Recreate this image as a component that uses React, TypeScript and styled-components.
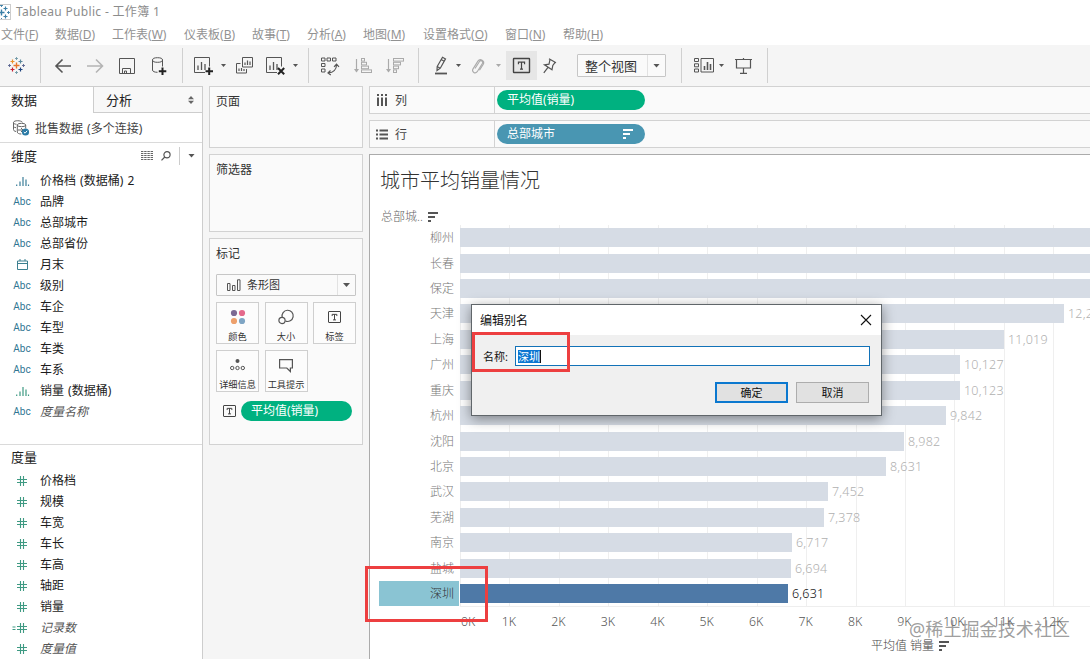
import React from "react";
import styled, { createGlobalStyle } from "styled-components";

const Global = createGlobalStyle`
  * { box-sizing: border-box; }
  html, body { margin: 0; padding: 0; overflow: hidden; }
  body {
    font-family: "Noto Sans", "Noto Sans CJK SC", sans-serif;
    font-size: 12px;
    color: #222;
    background: #f5f5f5;
  }
  svg { display: block; flex: none; overflow: visible; }
`;

const Page = styled.div`
  position: relative;
  width: 1090px;
  height: 659px;
  overflow: hidden;
  display: flex;
  flex-direction: column;
  background: #f5f5f5;
`;

const TitleBar = styled.header`
  height: 24px;
  background: #fff;
  display: flex;
  align-items: center;
  gap: 5px;
  font-size: 12px;
  letter-spacing: 0.32px;
  line-height: 24px;
  color: #8c8c8c;
`;

const AppIcon = styled.span`
  width: 11px;
  height: 16px;
  border: 1px solid #ccc;
  border-left: 0;
  overflow: hidden;
  display: flex;
  align-items: center;
  justify-content: flex-end;
`;

const MenuBar = styled.nav`
  height: 21px;
  background: #fff;
  padding-left: 1px;
  display: grid;
  grid-template-columns: 54px 57px 72px 68px 55px 56px 60px 82px 58px 60px;
  line-height: 21px;
  color: #929292;
  white-space: nowrap;
`;

const Toolbar = styled.div`
  height: 41px;
  display: flex;
  align-items: center;
  background: #f5f5f5;
`;

const Tool = styled.span<{ $before: number; $w: number; $active?: boolean }>`
  flex: none;
  margin-left: ${(p) => p.$before}px;
  width: ${(p) => p.$w}px;
  height: ${(p) => (p.$active ? 29 : 20)}px;
  display: flex;
  align-items: center;
  justify-content: center;
  background: ${(p) => (p.$active ? "#e6e6e6" : "transparent")};
`;

const Separator = styled.span<{ $before: number }>`
  flex: none;
  margin-left: ${(p) => p.$before}px;
  width: 1px;
  height: 35px;
  background: #d0d0d0;
`;

const Caret = styled.span<{ $before?: number; $size?: number; $color?: string }>`
  flex: none;
  margin-left: ${(p) => p.$before ?? 0}px;
  width: ${(p) => p.$size ?? 5}px;
  height: ${(p) => (p.$size ?? 5) / 2 + 0.5}px;
  background: ${(p) => p.$color ?? "#555"};
  clip-path: polygon(0 0, 100% 0, 50% 100%);
`;

const Combo = styled.div<{ $w: number; $h: number; $before?: number }>`
  flex: none;
  margin-left: ${(p) => p.$before ?? 0}px;
  width: ${(p) => p.$w}px;
  height: ${(p) => p.$h}px;
  border: 1px solid #c6c6c6;
  border-radius: 1px;
  background: #fafafa;
  display: flex;
`;

const ComboValue = styled.span<{ $pad: number; $size: number }>`
  flex: 1;
  display: flex;
  align-items: center;
  gap: 6px;
  padding-left: ${(p) => p.$pad}px;
  font-size: ${(p) => p.$size}px;
  line-height: 18px;
  color: #333;
  white-space: nowrap;
`;

const ComboArrow = styled.span`
  width: 18px;
  border-left: 1px solid #e2e2e2;
  display: flex;
  align-items: center;
  justify-content: center;
`;

const Workspace = styled.main`
  flex: 1;
  min-height: 0;
  display: flex;
`;

const DataPane = styled.aside`
  width: 203px;
  flex: none;
  background: #fff;
  border-right: 1px solid #cdcdcd;
  border-top: 1px solid #cdcdcd;
`;

const Tabs = styled.div`
  height: 26px;
  display: flex;
  font-size: 13px;
  line-height: 26px;
`;

const Tab = styled.div<{ $active?: boolean }>`
  width: ${(p) => (p.$active ? 93 : 109)}px;
  padding: 0 8px 0 ${(p) => (p.$active ? 11 : 12)}px;
  display: flex;
  align-items: center;
  justify-content: space-between;
  background: ${(p) => (p.$active ? "#fff" : "#f8f8f8")};
  border-left: ${(p) => (p.$active ? 0 : 1)}px solid #cdcdcd;
  border-bottom: ${(p) => (p.$active ? 0 : 1)}px solid #cdcdcd;
`;

const Source = styled.div`
  height: 30px;
  padding-left: 13px;
  display: flex;
  align-items: center;
  gap: 6px;
  border-bottom: 1px solid #dadada;
  word-spacing: 1px;
  color: #444;
`;

const SectionHead = styled.div<{ $h: number }>`
  height: ${(p) => p.$h}px;
  padding: 0 7px 2px 11px;
  display: flex;
  align-items: center;
  font-size: 13px;
  line-height: 20px;
`;

const HeadTools = styled.div`
  margin-left: auto;
  display: flex;
  align-items: center;
  gap: 8px;
`;

const HeadRule = styled.span`
  width: 1px;
  height: 18px;
  background: #ccc;
`;

const Fields = styled.ul<{ $h: number }>`
  list-style: none;
  margin: 0;
  padding: 0;
  height: ${(p) => p.$h}px;
`;

const Measures = styled.section`
  border-top: 1px solid #dadada;
`;

const Field = styled.li<{ $derived?: boolean }>`
  height: 21px;
  line-height: 21px;
  display: flex;
  align-items: center;
  word-spacing: 1px;
  font-style: ${(p) => (p.$derived ? "italic" : "normal")};
  color: ${(p) => (p.$derived ? "#555" : "#1c1c1c")};
`;

const FieldIcon = styled.span`
  width: 40px;
  padding-left: 4px;
  display: flex;
  justify-content: center;
  font: 400 10px/21px Roboto, sans-serif;
  letter-spacing: 0.1px;
  color: #2f7592;
`;

const Shelves = styled.div`
  width: 154px;
  margin-left: 6px;
  flex: none;
  display: flex;
  flex-direction: column;
  gap: 6px;
`;

const Card = styled.section<{ $h: number }>`
  height: ${(p) => p.$h}px;
  border: 1px solid #d2d2d2;
  background: #fafafa;
  padding: 5px 6px;
`;

const CardTitle = styled.h2`
  margin: 0;
  font-size: 12px;
  font-weight: 400;
  line-height: 20px;
  color: #333;
`;

const MarkType = styled.div`
  margin-top: 10px;
`;

const MarkGrid = styled.div`
  margin: 6px 0;
  display: grid;
  grid-template-columns: repeat(3, 43px);
  grid-auto-rows: 42px;
  column-gap: 5.5px;
  row-gap: 6px;
`;

const MarkButton = styled.div`
  border: 1px solid #cfcfcf;
  background: #fcfcfc;
  display: flex;
  flex-direction: column;
  align-items: center;
  justify-content: space-between;
  padding-top: 4px;
  font-size: 9.2px;
  line-height: 13px;
  color: #333;
  white-space: nowrap;
`;

const MarkIcon = styled.span`
  height: 20px;
  display: flex;
  align-items: center;
`;

const Encoding = styled.div`
  display: flex;
  align-items: center;
  gap: 5px;
  padding-left: 7px;
  margin-top: 9px;
`;

const Pill = styled.div<{ $w: number; $color: string; $pad: number }>`
  width: ${(p) => p.$w}px;
  height: 20px;
  border-radius: 10px;
  background: ${(p) => p.$color};
  color: #fff;
  font-size: 12px;
  line-height: 20px;
  padding: 0 12px 0 ${(p) => p.$pad}px;
  display: flex;
  align-items: center;
  justify-content: space-between;
`;

const Sheet = styled.div`
  margin-left: 6px;
  flex: 1;
  min-width: 0;
  display: flex;
  flex-direction: column;
`;

const Shelf = styled.div`
  height: 28px;
  flex: none;
  margin-bottom: 6px;
  border: 1px solid #d2d2d2;
  border-right: 0;
  background: #fafafa;
  display: flex;
  align-items: center;
`;

const ShelfName = styled.div`
  width: 125px;
  height: 26px;
  margin-right: 2px;
  padding-left: 6px;
  border-right: 1px solid #d2d2d2;
  display: flex;
  align-items: center;
  gap: 7px;
  color: #444;
`;

const Canvas = styled.section`
  flex: 1;
  min-height: 0;
  overflow: hidden;
  background: #fff;
  border: 1px solid #ababab;
  border-width: 1px 0 0 1px;
`;

const ChartTitle = styled.h1`
  margin: 0;
  height: 39px;
  padding: 12px 0 0 10px;
  font-size: 20px;
  line-height: 28px;
  font-weight: 300;
  color: #333;
`;

const RowHeader = styled.div`
  height: 31px;
  padding: 14px 0 0 11px;
  display: flex;
  align-items: center;
  gap: 5px;
  font-weight: 300;
  line-height: 17px;
  color: #666;
`;

const Plot = styled.div`
  position: relative;
  width: 721px;
  height: 382px;
`;

const GridLines = styled.div`
  position: absolute;
  inset: 0 0 0 90px;
  border-bottom: 1px solid #eee;
  border-left: 1px solid #eee;
  display: flex;
`;

const GridCell = styled.span`
  flex: none;
  width: 49.45px;
  border-right: 1px solid #efefef;
`;

const BarRow = styled.div`
  position: relative;
  height: 25.43px;
  display: flex;
  align-items: center;
`;

const BarLabel = styled.span<{ $selected?: boolean }>`
  flex: none;
  width: 80px;
  height: 25px;
  margin: 0 1px 0 9px;
  padding-right: 5px;
  text-align: right;
  line-height: 26px;
  font-weight: 300;
  color: ${(p) => (p.$selected ? "#333" : "#777")};
  background: ${(p) => (p.$selected ? "#8ac4d3" : "transparent")};
`;

const Bar = styled.span<{ $selected?: boolean }>`
  flex: none;
  height: 19px;
  background: ${(p) => (p.$selected ? "#4e79a7" : "#d6dce5")};
`;

const BarValue = styled.span<{ $selected?: boolean }>`
  margin-left: 4px;
  font-weight: 300;
  font-size: 12.5px;
  letter-spacing: 0.2px;
  color: ${(p) => (p.$selected ? "#111" : "#b0b0b0")};
`;

const Axis = styled.div`
  height: 30px;
  padding-left: 114.3px;
  display: flex;
  line-height: 30px;
  font-weight: 300;
  font-size: 12.3px;
  color: #555;
`;

const Tick = styled.span<{ $first?: boolean }>`
  flex: none;
  width: 49.45px;
  text-align: center;
  margin-left: ${(p) => (p.$first ? -41 : 0)}px;
  margin-right: ${(p) => (p.$first ? -8.5 : 0)}px;
`;

const AxisTitle = styled.div`
  padding-left: 501px;
  display: flex;
  align-items: center;
  gap: 5px;
  line-height: 17px;
  font-weight: 300;
  color: #444;
`;

const Dialog = styled.div`
  position: absolute;
  left: 471px;
  top: 304px;
  width: 411px;
  height: 112px;
  border: 1px solid #60666a;
  background: #f0f0f0;
  box-shadow: 0 3px 12px rgba(0, 0, 0, 0.42);
  color: #111;
`;

const DialogHead = styled.div`
  height: 30px;
  padding: 0 10px 0 8px;
  background: #fff;
  display: flex;
  align-items: center;
  justify-content: space-between;
`;

const NameRow = styled.label`
  height: 20px;
  margin: 11px 11px 0 11px;
  display: flex;
  align-items: center;
  font-size: 11px;
  gap: 7px;
`;

const NameInput = styled.span`
  flex: 1;
  height: 20px;
  border: 1px solid #1272b8;
  background: #fff;
  padding: 3px 2px;
  display: flex;
`;

const SelectedText = styled.span`
  height: 13px;
  line-height: 13px;
  background: #0b75d1;
  color: #fff;
  border-right: 1px solid #111;
`;

const DialogActions = styled.div`
  margin: 16px 12px 0 0;
  display: flex;
  justify-content: flex-end;
  gap: 8px;
`;

const DialogButton = styled.span<{ $primary?: boolean }>`
  width: 73px;
  height: 21px;
  border: ${(p) => (p.$primary ? "2px solid #0b78cf" : "1px solid #adadad")};
  background: #e1e1e1;
  display: flex;
  align-items: center;
  justify-content: center;
  font-size: 11px;
  line-height: 16px;
`;

const Marker = styled.div<{ $x: number; $y: number; $w: number; $h: number }>`
  position: absolute;
  left: ${(p) => p.$x}px;
  top: ${(p) => p.$y}px;
  width: ${(p) => p.$w}px;
  height: ${(p) => p.$h}px;
  border: 3px solid #ed3f40;
`;

const Watermark = styled.div`
  position: absolute;
  left: 909px;
  top: 617px;
  font-size: 18px;
  letter-spacing: 0.1px;
  line-height: 25px;
  white-space: nowrap;
  color: rgba(110, 110, 110, 0.68);
`;

/* ---------- icons ---------- */

const Ico = ({ w, h = 18, c = "#555", sw = 1, children }: {
  w: number; h?: number; c?: string; sw?: number; children: React.ReactNode;
}) => (
  <svg width={w} height={h} viewBox={`0 0 ${w} ${h}`} fill="none" stroke={c} strokeWidth={sw}>
    {children}
  </svg>
);

const LogoIcon = ({ mono }: { mono?: boolean }) => {
  const k = (c: string) => (mono ? "#3b7fa6" : c);
  return (
    <Ico w={17} h={17} sw={1.2}>
      <path d="M8.5 5.5v6M5.5 8.5h6" stroke={k("#e8762c")} strokeWidth={1.4} />
      <path d="M4.5 2.5v4M2.5 4.5h4" stroke={k("#eb912c")} />
      <path d="M12.5 2.5v4M10.5 4.5h4" stroke={k("#59879b")} />
      <path d="M4.5 10.5v4M2.5 12.5h4" stroke={k("#c72035")} />
      <path d="M12.5 10.5v4M10.5 12.5h4" stroke={k("#1f447e")} />
      <path d="M8.5 0v3M7 1.5h3M8.5 14v3M7 15.5h3" stroke={k("#7199a6")} strokeWidth={0.9} />
      <path d="M1.5 7v3M0 8.5h3M15.5 7v3M14 8.5h3" stroke={k("#5b6591")} strokeWidth={0.9} />
    </Ico>
  );
};

const ArrowIcon = ({ right }: { right?: boolean }) => (
  <Ico w={17} h={16} c={right ? "#b4b4b4" : "#555"} sw={1.6}>
    <path d={right ? "M0 8h15M9 1.500l6.500 6.500L9 14.500" : "M16 8H1.500M7.500 1.500L1 8l6.500 6.500"} />
  </Ico>
);

const SaveIcon = () => (
  <Ico w={16} h={16}>
    <path d="M.5.5h15v15H.5zM3.500 15.500v-5h8v5M5.500 15.500v-2.500h2v2.500" />
  </Ico>
);

const DbAddIcon = () => (
  <Ico w={15} h={18}>
    <ellipse cx="5.500" cy="3" rx="5" ry="2.300" />
    <path d="M.5 3v10c0 1.500 2 2.300 5 2.300M10.500 3v6.500" />
    <path d="M10.500 10.500v7.500M6.800 14.200h7.500" stroke="#222" strokeWidth={2} />
  </Ico>
);

const SheetIcon = ({ cross }: { cross?: boolean }) => (
  <Ico w={cross ? 20 : 19} h={18}>
    <path d="M11 15.500H.5v-15h15V9.500" />
    <path d="M4 13V8.500M7.500 13V5M11 13V7" strokeWidth={1.300} />
    {cross ? (
      <path d="M12 11l6.200 6.200M18.200 11L12 17.200" stroke="#222" strokeWidth={2} />
    ) : (
      <path d="M15.200 10.500V18M11.500 14.200H19" stroke="#222" strokeWidth={2} />
    )}
  </Ico>
);

const DuplicateIcon = () => (
  <Ico w={17} h={17}>
    <path d="M6.500.5h10v9.500h-10zM4.500 6.500h-4V16h10v-4" />
    <path d="M9 8V5.500M11.500 8V3.500M14 8V4.500M3 14v-2.500M5.500 14V11M8 14v-2" strokeWidth={1.200} />
  </Ico>
);

const SwapIcon = () => (
  <Ico w={18} h={18}>
    <path d="M.5 1h3.500v3H.5zM6 1h3.500v3H6zM11.500 1H15v3h-3.500zM.5 6.500h3.500v3H.5zM.5 12h3.500v3H.5z" />
    <path d="M15.500 8c0 4.500-3.500 7.500-8 8M13 9.800l2.500-2.600L18 9.800M9.500 13.500L7 16l2.800 2" strokeWidth={1.200} />
  </Ico>
);

const SortIcon = ({ desc }: { desc?: boolean }) => {
  const widths = desc ? [11, 8, 6, 4] : [4, 6, 8, 11];
  return (
    <Ico w={18} h={16} c="#aaa">
      <path d="M2.500 1v13" strokeWidth={1.200} />
      <path d="M0 11l2.500 3.500L5 11z" fill="#aaa" stroke="none" />
      {widths.map((w, i) => (
        <rect key={i} x={7.500} y={0.5 + i * 3.800} width={w - 1} height={2.600} />
      ))}
    </Ico>
  );
};

const HighlighterIcon = () => (
  <Ico w={14} h={19} sw={1.200}>
    <path d="M3.200 10.500L8.500 1.200l3 1.700-5.200 9.300-3.300 2.300zM3.200 10.500l3 1.700M7.200 3.500l3 1.700" />
    <path d="M1 17.500h12" strokeWidth={1.800} />
  </Ico>
);

const ClipIcon = () => (
  <Ico w={14} h={16} c="#aaa" sw={1.100}>
    <path d="M4 10.500l4.500-7c1.300-1.800 4-.2 3 1.800l-5.300 8.400c-2 2.500-5.700.4-4.300-2.600l5-8c2.200-3.200 7.200-.4 5.400 3.200l-3.800 6" />
  </Ico>
);

const TextIcon = ({ w, h }: { w: number; h: number }) => (
  <Ico w={w} h={h} c="#444">
    <rect x={0.5} y={0.5} width={w - 1} height={h - 1} rx={0.500} strokeWidth={w > 14 ? 1.400 : 1} />
    <path
      d={`M${w / 2 - w * 0.18} ${h * 0.42}V${h * 0.28}H${w / 2 + w * 0.18}V${h * 0.42}M${w / 2} ${h * 0.28}V${h * 0.74}M${w / 2 - 1.500} ${h * 0.74}h3`}
      strokeWidth={w > 14 ? 1.200 : 1}
    />
  </Ico>
);

const PinIcon = () => (
  <Ico w={14} h={16} sw={1.200}>
    <path d="M6 .8l7 4M7 1.500L6 6.200l-4.500.6 7.500 5 .8-4.300 2.500-3.300M5 9.300L.8 14.800" />
  </Ico>
);

const ShowMeIcon = () => (
  <Ico w={20} h={15}>
    <path d="M.5.5h4v3h-4zM.5 5.800h4v3h-4zM.5 11h4v3h-4zM7 .5h12.500V14H7z" />
    <path d="M10.500 12V8M13.500 12V4M16.500 12V6" strokeWidth={1.600} />
  </Ico>
);

const PresentIcon = () => (
  <Ico w={17} h={16} sw={1.200}>
    <path d="M0 1.500h17M1.500 1.500v8.500h14V1.500M8.500 0v1.500M8.500 10v5.300M5 15.300h7" />
  </Ico>
);

const SortBars = ({ c = "#555" }: { c?: string }) => (
  <Ico w={10} h={10} c={c} sw={1.800}>
    <path d="M0 1h10M0 5h7M0 9h3" />
  </Ico>
);

const BinIcon = ({ c }: { c: string }) => (
  <Ico w={13} h={10} c={c} sw={1.200}>
    <path d="M.7 10V8.500M4 10V5.500M7 10V1M10 10V3.500M12.500 10V8.500" />
  </Ico>
);

const DateIcon = () => (
  <Ico w={11} h={11} c="#3c8090">
    <path d="M.5 2h10v8.500H.5zM.5 4.500h10M3 0v2M8 0v2" />
  </Ico>
);

const HashIcon = ({ calc }: { calc?: boolean }) => (
  <Ico w={10} h={10} c="#3f9a83" sw={1.100}>
    <path d="M3.500 0v10M6.500 0v10M0 3.500h10M0 6.500h10" />
    {calc && <path d="M-4.500 4h3M-4.500 6.500h3" />}
  </Ico>
);

const SourceIcon = () => (
  <Ico w={16} h={16} c="#666">
    <path d="M3 11.500C1 11 .5 10.500.5 9.500V2.300C1 .2 8 .2 9.500 2.300M.5 3c.8 1 2 1.200 3 1.300M.5 6.500c.5.800 1.500 1.200 2.500 1.200" />
    <ellipse cx="8.500" cy="5" rx="4.200" ry="1.700" />
    <path d="M4.300 5v7c0 1.300 1.800 2 4 2M12.700 5v3.500M5 10h5M8 8l2 2-2 2" />
    <circle cx="12.500" cy="12" r="3.600" fill="#2a7aa5" stroke="none" />
    <path d="M10.800 12l1.300 1.200 2-2.400" stroke="#fff" />
  </Ico>
);

const GridIcon = () => (
  <Ico w={12} h={9} c="#666" sw={1}>
    <path d="M0 .5h12M0 2.500h12M0 4.500h12M0 6.500h12M0 8.500h12" strokeDasharray="2.400 .8" />
  </Ico>
);

const SearchIcon = () => (
  <Ico w={10} h={10} sw={1.200}>
    <circle cx="6" cy="3.800" r="3.100" />
    <path d="M3.800 6L.5 9.300" />
  </Ico>
);

const UpDownIcon = () => (
  <svg width="6" height="8" viewBox="0 0 6 8" fill="#666">
    <path d="M0 3.200L3 0l3 3.200zM0 4.800h6L3 8z" />
  </svg>
);

const BarsIcon = () => (
  <Ico w={14} h={12}>
    <path d="M.5 4.500H3v7H.5zM5.500 6.500H8v5H5.500zM10.500.8H13v10.700h-2.500z" />
  </Ico>
);

const ColumnsIcon = () => (
  <Ico w={12} h={12} sw={2}>
    <path d="M2 0v2M2 3.500V12M6 0v2M6 3.500V12M10 0v2M10 3.500V12" />
  </Ico>
);

const RowsIcon = () => (
  <Ico w={12} h={11} sw={1.800}>
    <path d="M0 1.500h2M3.500 1.500H12M0 5.500h2M3.500 5.500H12M0 9.500h2M3.500 9.500H12" />
  </Ico>
);

const ColorIcon = () => (
  <svg width="16" height="16" viewBox="0 0 16 16">
    <circle cx="4" cy="4" r="3.100" fill="#7c6a93" />
    <circle cx="12" cy="4" r="3.100" fill="#e4698b" />
    <circle cx="4" cy="12" r="3.100" fill="#eda06c" />
    <circle cx="12" cy="12" r="3.100" fill="#7fa5c4" />
  </svg>
);

const SizeIcon = () => (
  <Ico w={16} h={16} sw={1.200}>
    <path d="M4.200 8.300A5.600 5.600 0 1 1 7.400 12" />
    <circle cx="4" cy="11.500" r="3.100" />
  </Ico>
);

const DetailIcon = () => (
  <Ico w={15} h={12}>
    <circle cx="7.500" cy="2" r="2" fill="#555" stroke="none" />
    <circle cx="2.200" cy="9" r="1.700" />
    <circle cx="7.500" cy="9" r="1.700" />
    <circle cx="12.800" cy="9" r="1.700" />
  </Ico>
);

const TooltipIcon = () => (
  <Ico w={14} h={13} sw={1.200}>
    <path d="M.6.600h12.800v8.400h-2v3.500L7.800 9H.6z" />
  </Ico>
);

const CloseIcon = () => (
  <Ico w={10} h={10} c="#111" sw={1.100}>
    <path d="M0 0l10 10M10 0L0 10" />
  </Ico>
);

/* ---------- data ---------- */

const MENUS = [
  ["文件", "F"], ["数据", "D"], ["工作表", "W"], ["仪表板", "B"], ["故事", "T"],
  ["分析", "A"], ["地图", "M"], ["设置格式", "O"], ["窗口", "N"], ["帮助", "H"],
];

type Kind = "bin" | "binm" | "abc" | "date" | "num" | "calc";

const DIMENSIONS: [Kind, string, boolean?][] = [
  ["bin", "价格档 (数据桶) 2"], ["abc", "品牌"], ["abc", "总部城市"], ["abc", "总部省份"],
  ["date", "月末"], ["abc", "级别"], ["abc", "车企"], ["abc", "车型"], ["abc", "车类"],
  ["abc", "车系"], ["binm", "销量 (数据桶)"], ["abc", "度量名称", true],
];

const MEASURES: [Kind, string, boolean?][] = [
  ["num", "价格档"], ["num", "规模"], ["num", "车宽"], ["num", "车长"], ["num", "车高"],
  ["num", "轴距"], ["num", "销量"], ["calc", "记录数", true], ["num", "度量值", true],
];

const CITIES: [string, number, string][] = [
  ["柳州", 14000, ""], ["长春", 13800, ""], ["保定", 13500, ""], ["天津", 12220, "12,220"],
  ["上海", 11019, "11,019"], ["广州", 10127, "10,127"], ["重庆", 10123, "10,123"],
  ["杭州", 9842, "9,842"], ["沈阳", 8982, "8,982"], ["北京", 8631, "8,631"],
  ["武汉", 7452, "7,452"], ["芜湖", 7378, "7,378"], ["南京", 6717, "6,717"],
  ["盐城", 6694, "6,694"], ["深圳", 6631, "6,631"],
];

const PX_PER_UNIT = 0.0494;

const KindIcon = ({ kind }: { kind: Kind }) => {
  if (kind === "bin") return <BinIcon c="#3c7f99" />;
  if (kind === "binm") return <BinIcon c="#3f9a83" />;
  if (kind === "date") return <DateIcon />;
  if (kind === "num") return <HashIcon />;
  if (kind === "calc") return <HashIcon calc />;
  return <>Abc</>;
};

const FieldList = ({ items, height }: { items: [Kind, string, boolean?][]; height: number }) => (
  <Fields $h={height}>
    {items.map(([kind, name, derived]) => (
      <Field key={name} $derived={derived}>
        <FieldIcon><KindIcon kind={kind} /></FieldIcon>
        {name}
      </Field>
    ))}
  </Fields>
);

const MARKS: [string, React.ReactNode][] = [
  ["颜色", <ColorIcon />], ["大小", <SizeIcon />], ["标签", <TextIcon w={13} h={12} />],
  ["详细信息", <DetailIcon />], ["工具提示", <TooltipIcon />],
];

export default function App() {
  return (
    <Page>
      <Global />
      <TitleBar>
        <AppIcon><LogoIcon mono /></AppIcon>
        Tableau Public - 工作簿 1
      </TitleBar>
      <MenuBar>
        {MENUS.map(([name, key]) => (
          <span key={key}>{name}(<u>{key}</u>)</span>
        ))}
      </MenuBar>
      <Toolbar>
        <Tool $before={8} $w={17}><LogoIcon /></Tool>
        <Separator $before={15} />
        <Tool $before={14} $w={17}><ArrowIcon /></Tool>
        <Tool $before={15} $w={17}><ArrowIcon right /></Tool>
        <Tool $before={15} $w={16}><SaveIcon /></Tool>
        <Tool $before={17} $w={15}><DbAddIcon /></Tool>
        <Separator $before={15} />
        <Tool $before={11} $w={19}><SheetIcon /></Tool>
        <Caret $before={8} />
        <Tool $before={10} $w={17}><DuplicateIcon /></Tool>
        <Tool $before={13} $w={20}><SheetIcon cross /></Tool>
        <Caret $before={7} />
        <Separator $before={10} />
        <Tool $before={12} $w={18}><SwapIcon /></Tool>
        <Tool $before={15} $w={18}><SortIcon /></Tool>
        <Tool $before={14} $w={18}><SortIcon desc /></Tool>
        <Separator $before={14} />
        <Tool $before={15} $w={14}><HighlighterIcon /></Tool>
        <Caret $before={8} />
        <Tool $before={10} $w={14}><ClipIcon /></Tool>
        <Caret $before={11} $color="#aaa" />
        <Tool $before={5} $w={31} $active><TextIcon w={17} h={15} /></Tool>
        <Tool $before={6} $w={14}><PinIcon /></Tool>
        <Combo $before={20} $w={89} $h={23}>
          <ComboValue $pad={7} $size={13}>整个视图</ComboValue>
          <ComboArrow><Caret $size={7} /></ComboArrow>
        </Combo>
        <Separator $before={15} />
        <Tool $before={12} $w={20}><ShowMeIcon /></Tool>
        <Caret $before={5} />
        <Tool $before={11} $w={17}><PresentIcon /></Tool>
        <Separator $before={15} />
      </Toolbar>

      <Workspace>
        <DataPane>
          <Tabs>
            <Tab $active>数据</Tab>
            <Tab>分析<UpDownIcon /></Tab>
          </Tabs>
          <Source><SourceIcon />批售数据 (多个连接)</Source>
          <SectionHead $h={27}>
            维度
            <HeadTools>
              <GridIcon />
              <SearchIcon />
              <HeadRule />
              <Caret $size={7} />
            </HeadTools>
          </SectionHead>
          <FieldList items={DIMENSIONS} height={274} />
          <Measures>
            <SectionHead $h={25}>度量</SectionHead>
            <FieldList items={MEASURES} height={189} />
          </Measures>
        </DataPane>

        <Shelves>
          <Card $h={62}><CardTitle>页面</CardTitle></Card>
          <Card $h={78}><CardTitle>筛选器</CardTitle></Card>
          <Card $h={207}>
            <CardTitle>标记</CardTitle>
            <MarkType>
              <Combo $w={140} $h={22}>
                <ComboValue $pad={10} $size={11}><BarsIcon />条形图</ComboValue>
                <ComboArrow><Caret $size={7} /></ComboArrow>
              </Combo>
            </MarkType>
            <MarkGrid>
              {MARKS.map(([name, icon]) => (
                <MarkButton key={name}><MarkIcon>{icon}</MarkIcon>{name}</MarkButton>
              ))}
            </MarkGrid>
            <Encoding>
              <TextIcon w={13} h={12} />
              <Pill $w={111} $color="#00b180" $pad={10}>平均值(销量)</Pill>
            </Encoding>
          </Card>
        </Shelves>

        <Sheet>
          <Shelf>
            <ShelfName><ColumnsIcon />列</ShelfName>
            <Pill $w={148} $color="#00b180" $pad={10}>平均值(销量)</Pill>
          </Shelf>
          <Shelf>
            <ShelfName><RowsIcon />行</ShelfName>
            <Pill $w={148} $color="#4996b2" $pad={10}>总部城市<SortBars c="#fff" /></Pill>
          </Shelf>
          <Canvas>
            <ChartTitle>城市平均销量情况</ChartTitle>
            <RowHeader>总部城..<SortBars /></RowHeader>
            <Plot>
              <GridLines>
                {Array.from({ length: 12 }, (_, i) => <GridCell key={i} />)}
              </GridLines>
              {CITIES.map(([city, value, text]) => {
                const selected = city === "深圳";
                return (
                  <BarRow key={city}>
                    <BarLabel $selected={selected}>{city}</BarLabel>
                    <Bar $selected={selected} style={{ width: Math.round(value * PX_PER_UNIT) }} />
                    <BarValue $selected={selected}>{text}</BarValue>
                  </BarRow>
                );
              })}
            </Plot>
            <Axis>
              {Array.from({ length: 13 }, (_, i) => (
                <Tick key={i} $first={i === 0}>{i}K</Tick>
              ))}
            </Axis>
            <AxisTitle>平均值 销量<SortBars /></AxisTitle>
          </Canvas>
        </Sheet>
      </Workspace>

      <Dialog>
        <DialogHead>编辑别名<CloseIcon /></DialogHead>
        <NameRow>
          名称:
          <NameInput><SelectedText>深圳</SelectedText></NameInput>
        </NameRow>
        <DialogActions>
          <DialogButton $primary>确定</DialogButton>
          <DialogButton>取消</DialogButton>
        </DialogActions>
      </Dialog>
      <Marker $x={472} $y={332} $w={98} $h={40} />
      <Marker $x={365} $y={566} $w={123} $h={56} />
      <Watermark>@稀土掘金技术社区</Watermark>
    </Page>
  );
}
